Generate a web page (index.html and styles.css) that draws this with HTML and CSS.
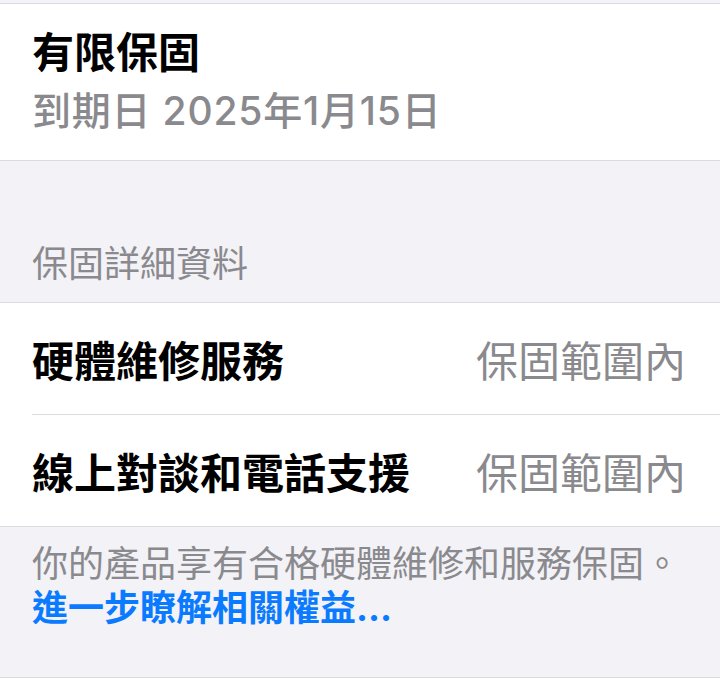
FILE: index.html
```html
<!DOCTYPE html>
<html lang="zh-Hant">
<head>
  <meta charset="UTF-8">
  <meta name="viewport" content="width=device-width, initial-scale=1.0">
  <title>保固</title>
  <link rel="stylesheet" href="styles.css">
</head>
<body>
  <div class="top-gap"></div>
  <section class="card">
    <h1 class="title">有限保固</h1>
    <p class="subtitle">到期日 2025年1月15日</p>
  </section>

  <h2 class="section-header">保固詳細資料</h2>
  <section class="group">
    <div class="row">
      <span class="label">硬體維修服務</span>
      <span class="value">保固範圍內</span>
    </div>
    <div class="row">
      <span class="label">線上對談和電話支援</span>
      <span class="value">保固範圍內</span>
    </div>
  </section>

  <footer class="section-footer">
    <p>你的產品享有合格硬體維修和服務保固。</p>
    <a href="#" class="more">進一步瞭解相關權益...</a>
  </footer>
  <div class="bottom"></div>
</body>
</html>
```

FILE: styles.css
```css
body {
  margin: 0;
  background-color: #f2f2f7;
  font-family: Inter, "Noto Sans CJK TC", sans-serif;
  color: #000;
}
.top-gap {
  height: 3px;
}
.card {
  background: #fff;
  border-top: 1px solid #dcdce0;
  border-bottom: 1px solid #dcdce0;
  padding: 24px 34px 26px 32px;
}
.title {
  margin: 0;
  font-size: 42px;
  line-height: 50px;
  font-weight: 700;
}
.subtitle {
  margin: 9px 0 0;
  font-size: 39px;
  line-height: 47px;
  font-weight: 500;
  letter-spacing: 0.8px;
  color: #8a8a8e;
}
.section-header {
  margin: 0;
  padding: 81px 32px 16px;
  font-size: 36px;
  line-height: 44px;
  font-weight: 400;
  color: #8a8a8e;
}
.group {
  background: #fff;
  border-top: 1px solid #dcdce0;
  border-bottom: 1px solid #dcdce0;
  padding-left: 32px;
}
.row {
  display: flex;
  justify-content: space-between;
  align-items: center;
  height: 111px;
  padding-right: 34px;
}
.row + .row {
  border-top: 1px solid #dcdce0;
}
.label {
  font-size: 42px;
  font-weight: 700;
}
.value {
  font-size: 42px;
  color: #8a8a8e;
}
.section-footer {
  padding: 15px 32px 47px;
  font-size: 36px;
  line-height: 44px;
}
.section-footer p {
  margin: 0;
  color: #8a8a8e;
}
.more {
  display: block;
  color: #0a7aff;
  font-weight: 700;
  text-decoration: none;
}
.bottom {
  background: #fff;
  border-top: 1px solid #dcdce0;
  height: 20px;
}
```
